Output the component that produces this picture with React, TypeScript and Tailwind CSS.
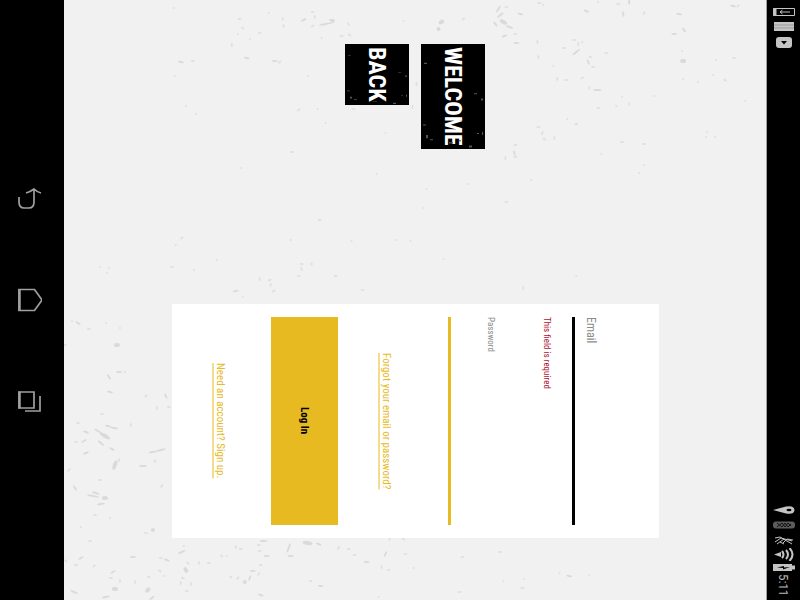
import type { ReactNode } from "react";

const narrow = "font-['Liberation_Sans_Narrow','Roboto_Condensed','Liberation_Sans',sans-serif]";

type Speck = [x: number, y: number, rx: number, ry: number, angle: number];

const specks: Speck[] = [
  [110, 8, 1, 1, 0], [176, 19, 2, 1, 0], [179, 28, 2, 1, 40], [174, 34, 1, 1, 0], [168, 45, 1, 2, 0],
  [186, 39, 1, 1, 0], [196, 33, 2, 1, 0], [183, 58, 3, 1, 10], [117, 62, 3, 1, 10], [129, 61, 2, 1, 0],
  [205, 13, 1, 1, 0], [220, 26, 2, 1, 60], [219, 19, 1, 2, 0], [240, 20, 3, 1, -25], [249, 12, 2, 1, 0],
  [251, 17, 1, 2, 0], [249, 26, 2, 1, -30], [262, 24, 7, 1, -10], [268, 20, 3, 1, 0], [258, 38, 1, 1, 0],
  [211, 61, 3, 1, 0], [216, 62, 2, 1, -40], [244, 76, 1, 1, 0], [235, 110, 2, 1, -30], [254, 109, 1, 1, 0],
  [262, 123, 1, 1, 0], [122, 106, 1, 1, 0], [132, 114, 1, 1, 0], [228, 152, 2, 1, 0], [177, 168, 1, 1, 0],
  [111, 76, 1, 1, 0], [112, 245, 1, 1, 0], [118, 238, 2, 1, -40], [108, 267, 2, 1, 0], [130, 270, 1, 1, 0],
  [36, 267, 1, 1, 0], [45, 268, 1, 1, 0], [43, 273, 1, 1, 0], [153, 260, 1, 1, 0], [172, 291, 3, 1, -10],
  [179, 297, 1, 1, 0], [196, 279, 1, 2, 0], [206, 280, 2, 1, -20], [207, 285, 1, 2, 30], [210, 291, 2, 1, -30],
  [238, 264, 2, 1, 0], [238, 269, 1, 2, -30], [235, 276, 2, 1, 10], [248, 264, 1, 2, 0], [227, 240, 1, 1, 0],
  [256, 220, 2, 1, 0], [285, 24, 1, 2, -20], [286, 35, 2, 1, 30], [269, 21, 2, 2, 0], [340, 21, 1, 1, 0],
  [378, 22, 3, 2, -30], [375, 29, 2, 2, 40], [400, 19, 2, 1, -30], [278, 36, 2, 1, 0], [353, 84, 1, 2, 0],
  [349, 107, 1, 2, 0], [290, 109, 2, 1, 0], [322, 133, 1, 1, 0], [313, 174, 1, 1, 0], [363, 189, 1, 1, 0],
  [404, 184, 1, 1, 0], [360, 208, 1, 1, 0], [288, 241, 1, 1, 0], [333, 240, 1, 1, 0], [347, 241, 1, 1, 0],
  [380, 259, 1, 1, 0], [272, 276, 2, 1, 0], [299, 290, 2, 1, 0], [443, 202, 2, 1, 0], [460, 289, 1, 1, 0],
  [435, 9, 4, 1, -60], [437, 15, 4, 1, -40], [443, 7, 2, 1, 0], [440, 22, 4, 2, 30], [446, 27, 4, 1, 20],
  [432, 24, 3, 1, 50], [441, 36, 3, 1, -20], [452, 34, 2, 1, 0], [457, 14, 3, 1, 10], [453, 43, 3, 1, 5],
  [476, 3, 2, 1, 0], [480, 5, 1, 1, 0], [523, 11, 3, 1, 20], [535, 2, 1, 1, 0], [555, 4, 2, 1, 0],
  [560, 14, 1, 3, -10], [566, 2, 1, 3, 0], [581, 13, 1, 2, 20], [616, 14, 3, 1, 10], [621, 30, 3, 1, 50],
  [611, 34, 3, 1, -5], [670, 6, 3, 1, 10], [675, 6, 2, 1, -40], [620, 61, 3, 2, 0], [619, 51, 1, 1, 0],
  [501, 48, 2, 1, 0], [511, 40, 2, 1, 0], [515, 44, 1, 2, 0], [513, 52, 5, 1, -40], [519, 42, 1, 1, 0],
  [525, 62, 1, 3, -20], [527, 57, 2, 1, 0], [530, 67, 2, 1, 0], [543, 53, 2, 1, 0], [474, 42, 1, 2, 0],
  [475, 57, 1, 2, 0], [490, 66, 1, 1, 0], [494, 79, 1, 2, 10], [503, 80, 2, 1, 0], [519, 78, 2, 1, -30],
  [526, 88, 1, 2, 10], [534, 90, 4, 1, 0], [559, 97, 1, 1, 0], [566, 104, 1, 2, 0], [553, 106, 1, 1, 0],
  [535, 108, 2, 1, 0], [504, 119, 1, 1, 0], [513, 124, 2, 1, -20], [475, 127, 2, 1, 0], [479, 133, 1, 2, 20],
  [481, 139, 2, 1, 30], [491, 138, 1, 2, 0], [452, 145, 2, 1, 0], [451, 153, 1, 3, -20], [452, 157, 2, 1, 0],
  [442, 158, 1, 2, 0], [468, 180, 1, 1, 0], [538, 154, 1, 1, 0], [559, 142, 2, 1, 0], [581, 144, 2, 1, 0],
  [581, 165, 1, 1, 0], [576, 173, 1, 1, 0], [620, 79, 1, 1, 0], [635, 82, 1, 1, 0], [662, 80, 2, 1, 20],
  [650, 75, 1, 1, 0], [671, 58, 2, 1, 10], [653, 60, 1, 1, 0], [682, 101, 1, 1, 0], [591, 96, 1, 1, 0],
  [643, 137, 1, 1, 0], [652, 137, 1, 1, 0], [513, 276, 1, 1, 0], [460, 287, 1, 1, 0], [644, 132, 1, 1, 0],
  [14, 323, 3, 1, 30], [8, 321, 1, 1, 0], [42, 323, 1, 1, 0], [56, 328, 1, 1, 0], [53, 345, 3, 2, 0],
  [1, 345, 2, 1, 0], [25, 329, 2, 1, 0], [45, 377, 3, 1, 60], [55, 372, 3, 1, 0], [61, 372, 1, 1, 0],
  [46, 392, 3, 1, 10], [82, 396, 2, 1, -60], [102, 396, 1, 3, -20], [93, 408, 1, 2, 0], [105, 407, 2, 1, 0],
  [38, 414, 2, 1, 0], [44, 426, 3, 1, 10], [50, 428, 4, 1, 10], [34, 431, 4, 1, 30], [41, 436, 6, 2, 30],
  [37, 443, 4, 1, 40], [22, 432, 3, 1, 20], [20, 441, 3, 1, -30], [12, 442, 2, 1, 0], [48, 449, 3, 1, 25],
  [67, 425, 1, 2, 0], [14, 423, 2, 1, -20], [51, 465, 2, 5, 20], [55, 460, 1, 2, 0], [22, 453, 3, 1, -20],
  [5, 470, 2, 1, -45], [79, 466, 4, 1, 0], [89, 452, 4, 1, -10], [97, 450, 5, 1, -15], [91, 461, 1, 2, -30],
  [98, 486, 2, 1, -50], [29, 496, 6, 1, 10], [32, 493, 4, 1, 20], [41, 498, 3, 2, 0], [37, 504, 4, 1, -10],
  [11, 488, 1, 3, -30], [36, 480, 2, 1, 0], [46, 518, 1, 1, 0], [31, 515, 2, 1, 0], [17, 527, 1, 1, 0],
  [89, 530, 2, 2, 0], [82, 533, 2, 1, 0], [69, 557, 3, 1, 0], [26, 541, 2, 1, 0], [17, 558, 3, 1, -30],
  [12, 565, 2, 1, 20], [2, 561, 2, 1, 40], [30, 566, 2, 1, -40], [49, 572, 3, 1, -30], [47, 578, 2, 1, 0],
  [71, 582, 1, 2, 0], [51, 589, 3, 2, 0], [42, 597, 4, 1, -10], [10, 592, 4, 1, 25], [56, 581, 1, 2, 0],
  [84, 590, 2, 3, 40], [85, 577, 2, 1, 0], [96, 571, 2, 1, 30], [100, 576, 1, 1, 0], [88, 598, 3, 1, -40],
  [103, 560, 3, 1, 20], [97, 558, 2, 1, 0], [118, 552, 4, 1, -25], [120, 546, 1, 1, 0], [124, 563, 2, 1, 40],
  [122, 570, 2, 3, -30], [119, 578, 2, 1, 20], [117, 583, 1, 2, 0], [135, 563, 1, 2, 0], [145, 563, 2, 1, 0],
  [158, 556, 2, 1, 40], [163, 556, 1, 1, 0], [172, 547, 1, 2, 0], [177, 549, 2, 1, 0], [200, 541, 4, 1, 0],
  [195, 545, 2, 1, 0], [196, 551, 2, 1, 0], [203, 556, 3, 1, 0], [197, 565, 2, 1, 0], [189, 571, 3, 1, 0],
  [195, 574, 1, 2, 30], [186, 578, 1, 3, 20], [181, 582, 2, 2, -30], [174, 578, 2, 1, -40], [167, 577, 2, 1, 40],
  [225, 548, 1, 5, 20], [227, 556, 3, 1, 0], [244, 543, 5, 2, 10], [255, 544, 3, 1, 20], [275, 548, 2, 1, -50],
  [285, 549, 2, 1, 0], [291, 555, 2, 1, 0], [303, 562, 3, 1, 0], [322, 554, 1, 3, 25], [318, 567, 1, 2, 0],
  [326, 539, 1, 2, 0], [340, 539, 2, 1, 40], [342, 554, 2, 1, 0], [350, 568, 1, 1, 0], [325, 570, 2, 1, 0],
  [247, 581, 2, 1, 10], [257, 586, 3, 1, 5], [197, 595, 3, 1, 20], [315, 597, 1, 1, 0], [399, 557, 2, 1, 0],
  [437, 552, 2, 1, 0], [461, 579, 1, 1, 0], [440, 581, 1, 1, 0], [396, 592, 2, 1, 0], [496, 573, 1, 1, 0],
  [506, 576, 3, 1, 10], [526, 575, 1, 1, 0], [459, 588, 2, 1, 0], [123, 591, 2, 1, 0], [127, 584, 1, 2, 0],
];

function Texture() {
  return (
    <svg className="absolute inset-0 h-full w-full" viewBox="0 0 703 600" preserveAspectRatio="none" fill="#dadada" aria-hidden="true">
      {specks.map(([x, y, rx, ry, angle], i) => (
        <ellipse key={i} cx={x} cy={y} rx={rx} ry={ry} opacity={rx * ry > 2 ? 1 : 0.75} transform={`rotate(${angle} ${x} ${y})`} />
      ))}
    </svg>
  );
}

function NavButton({ label, children }: { label: string; children: ReactNode }) {
  return (
    <button type="button" aria-label={label} className="flex h-[101px] w-16 items-center justify-center pr-2">
      <svg width="28" height="28" viewBox="0 0 28 28" fill="none" stroke="#a0a0a0" strokeWidth="1.700">
        {children}
      </svg>
    </button>
  );
}

function Title({ children }: { children: string }) {
  return (
    <span className="relative flex w-16 items-center justify-center bg-black px-[3px] text-[24px] font-bold leading-none text-white">
      {children}
      <svg className="absolute inset-0 h-full w-full" viewBox="0 0 64 100" preserveAspectRatio="none" fill="#555555" aria-hidden="true">
        <path d="M3 18h3v1H3zM53 47h3v1h-3zM60 52h2v2h-2zM5 87h2v3H5zM9 91h3v1H9zM28 94h4v1h-4zM38 92h2v1h-2zM48 97h3v2h-3zM56 85h2v1h-2zM61 84h1v3h-1zM2 77h3v1H2z" />
      </svg>
    </span>
  );
}

const field = "block h-full bg-transparent outline-none [writing-mode:vertical-rl]";

export default function App() {
  return (
    <div className={`flex h-screen overflow-hidden bg-black ${narrow}`}>
      <nav className="flex w-16 shrink-0 flex-col items-center justify-center">
        <NavButton label="Back">
          <path d="M5 12v5q0 6 5 6h5q5 0 5-6V5M12 8q4-1 8-4 3 3 7 4" />
        </NavButton>
        <NavButton label="Home">
          <path d="M5 3.500h15.500L28 14l-7.500 10.500H5z" />
          <path d="M5.500 3v22" strokeWidth="2.500" />
        </NavButton>
        <NavButton label="Recent apps">
          <path d="M5 5h15v16H5zM11 24h15V9" />
          <path d="M5.500 4.500v17" strokeWidth="2.500" />
        </NavButton>
      </nav>

      <main className="relative flex min-w-0 flex-1 flex-col items-center border-r border-[#a0a0a0] bg-[#f1f1f1]">
        <Texture />
        <h1 className="relative flex flex-1 flex-col items-start gap-3 pt-11 [writing-mode:vertical-rl]">
          <Title>WELCOME</Title>
          <Title>BACK</Title>
        </h1>

        <form
          noValidate
          onSubmit={(e) => e.preventDefault()}
          className="relative mb-[62px] h-[234px] bg-white pt-[13px] pr-[51px] pb-[13px] pl-[38px] [writing-mode:vertical-rl]"
        >
          <input
            type="email"
            aria-label="Email"
            aria-invalid="true"
            aria-describedby="email-error"
            placeholder="Email"
            className={`${field} w-9 border-l-[3px] border-black text-[12px] placeholder:text-[#8c8c8c] placeholder:opacity-100`}
          />
          <p id="email-error" className="mr-[15px] text-[9px] leading-5 text-[#b0112f]">
            This field is required
          </p>
          <label htmlFor="password" className="mr-9 block text-[9px] leading-5 text-[#8c8c8c]">
            Password
          </label>
          <input id="password" type="password" className={`${field} w-[33px] border-l-[3px] border-[#e7ba22] text-[12px]`} />
          <p className="mr-[52px] text-center text-[11px] leading-5">
            <a href="#forgot" className="text-[#e7ba22] underline">
              Forgot your email or password?
            </a>
          </p>
          <button type="submit" className="mr-[38px] block h-full w-[67px] bg-[#e7ba22] text-center text-[11px] font-bold text-black">
            Log In
          </button>
          <p className="mr-[41px] text-center text-[11px] leading-5">
            <a href="#signup" className="text-[#e7ba22] underline">
              Need an account? Sign up.
            </a>
          </p>
        </form>
      </main>

      <aside className="flex w-[33px] shrink-0 flex-col items-center justify-between pt-2">
        <div className="flex flex-col items-center gap-1.5">
          <svg width="22" height="8" viewBox="0 0 22 8" fill="none" stroke="#c4c4c4">
            <path d="M.5.500h21v7H.500z" />
            <path d="M2 0v8" strokeWidth="3" />
            <path d="M7 4h10M9.500 2L7 4l2.500 2" />
          </svg>
          <svg width="20" height="9" viewBox="0 0 20 9" fill="#c4c4c4">
            <path d="M0 0h20v9H0z" />
            <path d="M0 3h20M0 6h20" stroke="#999999" strokeWidth="1" />
          </svg>
          <svg width="16" height="11" viewBox="0 0 16 11" fill="#c4c4c4">
            <rect width="16" height="11" rx="3" />
            <path d="M5 4h6L8 7.500z" fill="#000000" />
          </svg>
        </div>
        <div className="flex flex-col items-center gap-[3px]">
          <div className="flex flex-col items-center gap-[7px]">
            <svg width="22" height="8" viewBox="0 0 22 8" fill="#c4c4c4">
              <path d="M0 4L13 .500Q21-1 21.500 4 21 9 13 7.500z" />
              <ellipse cx="16" cy="4" rx="2.500" ry="1.300" fill="#000000" />
            </svg>
            <svg width="22" height="8" viewBox="0 0 22 8">
              <rect y=".5" width="22" height="7" rx="3" fill="#5c5c5c" />
              <path d="M4 2l5 4 3-4 3 4 3-3M4 6l5-4 3 4 3-4 3 3" fill="none" stroke="#111111" />
            </svg>
            <svg width="20" height="9" viewBox="0 0 20 9" fill="none" stroke="#c4c4c4">
              <path d="M1 2l5-1 12 7M1 6l6-4 11 3M3 8l7-5M9 7l4-4 6 1M6 6l4 2" />
            </svg>
          </div>
          <svg width="20" height="13" viewBox="0 0 20 13" fill="none" stroke="#c4c4c4" strokeWidth="2">
            <path d="M0 6.500L7 4v5z" fill="#c4c4c4" stroke="none" />
            <path d="M8 3q3 3.500 0 7M12 2q4 4.500 0 9M15.500 0q6 6.500 0 13" />
          </svg>
          <svg width="22" height="7" viewBox="0 0 22 7" fill="#c4c4c4">
            <path d="M0 0h19v1.500h3v4h-3V7H0z" />
            <path d="M4 3.500L11 2v1.500L17 3l-7 2.500V4z" fill="#000000" />
          </svg>
          <time className="pb-1 text-[13px] leading-none text-[#b8b8b8] [writing-mode:vertical-rl]">5:11</time>
        </div>
      </aside>
    </div>
  );
}
